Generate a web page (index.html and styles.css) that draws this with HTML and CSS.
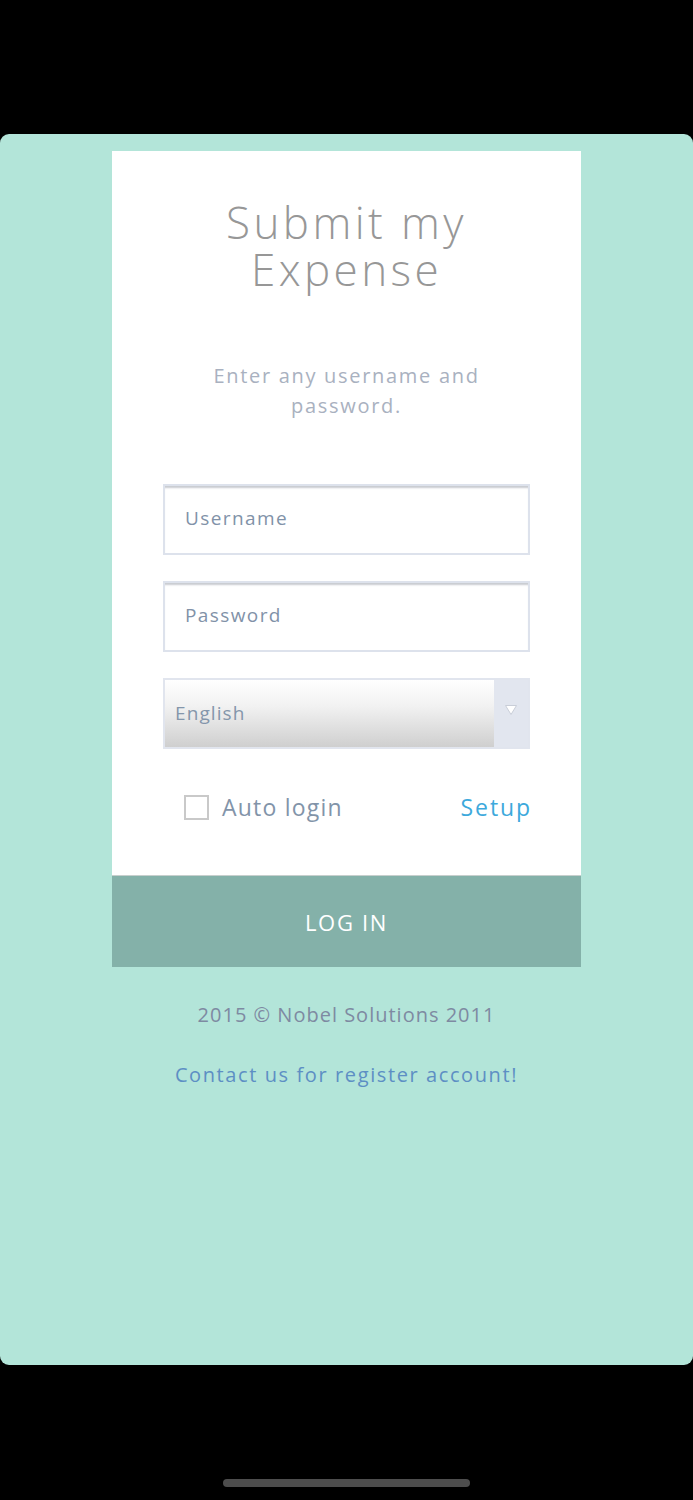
FILE: index.html
```html
<!DOCTYPE html>
<html>
<head>
<meta charset="utf-8">
<link rel="stylesheet" href="styles.css">
</head>
<body>
<div class="screen">
  <div class="topbar"></div>
  <div class="panel">
    <div class="card">
      <h1 class="title"><span class="title-line">Submit my</span><span class="title-line">Expense</span></h1>
      <p class="hint">Enter any username and<br>password.</p>
      <div class="field"><span class="placeholder">Username</span></div>
      <div class="field"><span class="placeholder">Password</span></div>
      <div class="select">
        <span class="select-value">English</span>
        <span class="select-arrow">
          <svg width="14" height="12" viewBox="0 0 14 12"><path d="M1.5 1.5 L12.5 1.5 L7 10.5 Z" fill="#ffffff" stroke="#c9ced8" stroke-width="1"/></svg>
        </span>
      </div>
      <div class="options">
        <label class="auto"><span class="checkbox"></span><span class="auto-text">Auto login</span></label>
        <span class="setup">Setup</span>
      </div>
    </div>
    <div class="login">LOG IN</div>
    <p class="copy">2015 © Nobel Solutions 2011</p>
    <p class="contact">Contact us for register account!</p>
  </div>
  <div class="bottombar"><span class="home"></span></div>
</div>
</body>
</html>
```
FILE: styles.css
```css
html, body {
  margin: 0;
  padding: 0;
  background: #000;
}
body {
  font-family: "Open Sans", "Liberation Sans", sans-serif;
}
.screen {
  width: 693px;
  height: 1500px;
  display: flex;
  flex-direction: column;
  background: #000;
}
.topbar {
  height: 134px;
  flex: none;
}
.panel {
  height: 1231px;
  flex: none;
  background: #b3e5d9;
  border-radius: 9px;
  display: flex;
  flex-direction: column;
  align-items: center;
  padding-top: 17px;
  box-sizing: border-box;
}
.card {
  width: 469px;
  height: 724px;
  background: #fff;
  box-sizing: border-box;
  display: flex;
  flex-direction: column;
  align-items: center;
  padding-top: 48px;
}
.title {
  margin: 0;
  font-weight: 300;
  font-size: 44px;
  line-height: 47px;
  letter-spacing: 3.4px;
  color: #979797;
  text-align: center;
  display: flex;
  flex-direction: column;
  align-items: center;
}
.title-line {
  display: block;
  height: 47px;
}
.hint {
  margin: 68px 0 0;
  font-size: 20px;
  line-height: 30px;
  letter-spacing: 1.7px;
  color: #a9b1c0;
  text-align: center;
  font-weight: 400;
}
.field {
  margin-top: 63px;
  width: 367px;
  height: 71px;
  box-sizing: border-box;
  border: 2px solid #dde2ec;
  box-shadow: inset 0 3px 2px -1px #c8cbd0;
  display: flex;
  align-items: center;
  padding-left: 20px;
  padding-bottom: 3px;
}
.field + .field {
  margin-top: 26px;
}
.placeholder {
  font-size: 19px;
  letter-spacing: 1.4px;
  color: #8192a8;
}
.select {
  margin-top: 26px;
  width: 367px;
  height: 71px;
  box-sizing: border-box;
  border: 2px solid #e1e5ee;
  display: flex;
}
.select-value {
  flex: 1;
  background: linear-gradient(#ffffff, #f1f1f1 40%, #cfcfcf);
  display: flex;
  align-items: center;
  padding-left: 10px;
  padding-bottom: 1px;
  font-size: 19px;
  letter-spacing: 1.1px;
  color: #8496ab;
}
.select-arrow {
  width: 34px;
  background: #e2e6ef;
  display: flex;
  justify-content: center;
  padding-top: 24px;
  box-sizing: border-box;
}
.options {
  margin-top: 42px;
  width: 367px;
  display: flex;
  justify-content: space-between;
  align-items: center;
}
.auto {
  display: flex;
  align-items: center;
  padding-left: 21px;
}
.checkbox {
  width: 25px;
  height: 25px;
  box-sizing: border-box;
  border: 2px solid #c9c9c9;
  background: #fff;
}
.auto-text {
  margin-left: 13px;
  font-size: 23px;
  letter-spacing: 1.2px;
  color: #8294a9;
}
.setup {
  font-size: 23px;
  letter-spacing: 1.9px;
  margin-right: -2px;
  color: #3da9dc;
}
.login {
  width: 469px;
  height: 92px;
  background: #84b1a9;
  border-top: 1px solid #c7cfcd;
  box-sizing: border-box;
  color: #fff;
  font-size: 22px;
  letter-spacing: 1.7px;
  display: flex;
  align-items: center;
  justify-content: center;
}
.copy {
  margin: 34px 0 0;
  font-size: 20px;
  line-height: 28px;
  letter-spacing: 1px;
  color: #7e8aa2;
}
.contact {
  margin: 32px 0 0;
  font-size: 20px;
  line-height: 28px;
  letter-spacing: 1.6px;
  color: #5d8fc4;
}
.bottombar {
  flex: 1;
  display: flex;
  justify-content: center;
  align-items: flex-end;
  padding-bottom: 13px;
}
.home {
  width: 247px;
  height: 8px;
  border-radius: 4px;
  background: #4d4d4d;
}
```
